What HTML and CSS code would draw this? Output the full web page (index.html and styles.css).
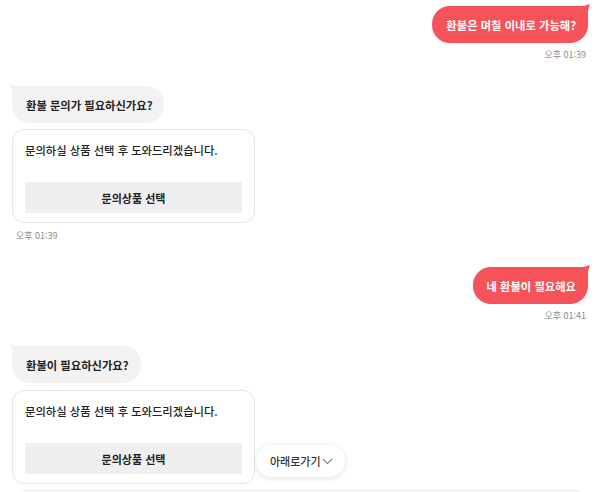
FILE: index.html
```html
<!DOCTYPE html>
<html lang="ko">
<head>
<meta charset="utf-8">
<link rel="stylesheet" href="styles.css">
</head>
<body>
<div class="chat">
  <div class="row right first">
    <div class="bubble me">환불은 며칠 이내로 가능해?</div>
  </div>
  <div class="time right-time">오후 01:39</div>

  <div class="row left gap-lg">
    <div class="bubble bot">환불 문의가 필요하신가요?</div>
  </div>
  <div class="card">
    <p class="card-text">문의하실 상품 선택 후 도와드리겠습니다.</p>
    <button class="card-btn">문의상품 선택</button>
  </div>
  <div class="time left-time">오후 01:39</div>

  <div class="row right gap-xl">
    <div class="bubble me">네 환불이 필요해요</div>
  </div>
  <div class="time right-time">오후 01:41</div>

  <div class="row left gap-lg2">
    <div class="bubble bot">환불이 필요하신가요?</div>
  </div>
  <div class="card last">
    <p class="card-text">문의하실 상품 선택 후 도와드리겠습니다.</p>
    <button class="card-btn">문의상품 선택</button>
  </div>
  <div class="divider"></div>

  <button class="scroll-down">아래로가기<svg width="11" height="7" viewBox="0 0 11 7"><path d="M1 1.2 L5.5 5.6 L10 1.2" fill="none" stroke="#777" stroke-width="1.1"/></svg></button>
</div>
</body>
</html>
```

FILE: styles.css
```css
* { box-sizing: border-box; }
html, body { margin: 0; padding: 0; background: #fff; }
body {
  width: 600px;
  height: 492px;
  overflow: hidden;
  font-family: "Noto Sans CJK KR", "Noto Sans", sans-serif;
  color: #222;
}
.chat {
  position: relative;
  display: flex;
  flex-direction: column;
  padding: 0 12px;
}
.row { display: flex; }
.row.right { justify-content: flex-end; }
.row.left { justify-content: flex-start; }
.first { margin-top: 6px; }
.gap-lg { margin-top: 25px; }
.gap-xl { margin-top: 25px; }
.gap-lg2 { margin-top: 24px; }

.bubble {
  position: relative;
  height: 37px;
  display: flex;
  align-items: center;
  padding: 0 12px 0 14px;
  font-size: 11.3px;
  font-weight: 700;
  border-radius: 18px;
  white-space: nowrap;
}
.bubble.me {
  background: #f5525a;
  color: #fff;
  border-top-right-radius: 0;
}
.bubble.me::after {
  content: "";
  position: absolute;
  right: -2px;
  top: -2px;
  width: 8px;
  height: 8px;
  background: #f5525a;
  clip-path: polygon(0 30%, 100% 0, 70% 100%, 0 100%);
}
.bubble.bot {
  background: #f2f2f2;
  color: #222;
  border-top-left-radius: 0;
}
.bubble.bot::after {
  content: "";
  position: absolute;
  left: -2px;
  top: -2px;
  width: 8px;
  height: 8px;
  background: #f2f2f2;
  clip-path: polygon(0 0, 100% 30%, 100% 100%, 30% 100%);
}

.time {
  font-size: 9px;
  color: #8c8c8c;
  margin-top: 6px;
  line-height: 12px;
}
.right-time { align-self: flex-end; margin-right: 2px; }
.left-time { align-self: flex-start; margin-left: 4px; margin-top: 7px; }

.card {
  width: 243px;
  margin-top: 6px;
  border: 1px solid #e6e6e6;
  border-radius: 12px;
  padding: 13px 12px 9px 12px;
  background: #fff;
}
.card.last { margin-top: 7px; }
.card-text {
  margin: 0;
  font-size: 11.3px;
  font-weight: 500;
  line-height: 14px;
  color: #222;
}
.card-btn {
  display: block;
  width: 100%;
  height: 31px;
  margin-top: 25px;
  border: none;
  border-radius: 2px;
  background: #efefef;
  font-family: inherit;
  font-size: 11px;
  font-weight: 700;
  color: #222;
}
.divider {
  margin: 6px 8px 0 10px;
  height: 1px;
  background: #ececec;
}
.scroll-down {
  position: absolute;
  left: 256px;
  top: 445px;
  height: 32px;
  padding: 0 12px 0 14px;
  display: flex;
  align-items: center;
  gap: 1px;
  border: none;
  border-radius: 16px;
  background: #fff;
  box-shadow: 0 1px 6px rgba(0,0,0,0.12);
  font-family: inherit;
  font-size: 11px;
  font-weight: 500;
  color: #333;
}
```
